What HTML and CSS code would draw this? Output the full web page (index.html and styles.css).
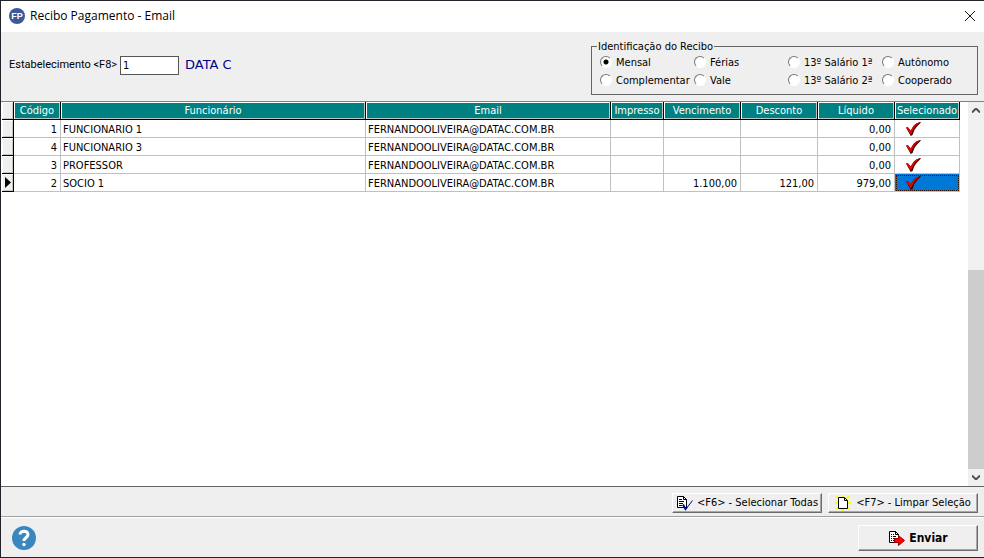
FILE: index.html
```html
<!DOCTYPE html>
<html lang="pt-BR">
<head>
<meta charset="utf-8">
<title>Recibo Pagamento - Email</title>
<link rel="stylesheet" href="styles.css">
</head>
<body>
<svg class="defs" aria-hidden="true">
  <symbol id="check" viewBox="0 0 16 15">
    <path d="M0 6l2-.5 3 3.500 3-5 3-2.500 4-1.500 1 .5-4 4-3 4-2 5.500-2 1z" fill="#400"/>
    <path d="M0 6l2-.5 3 4 3-5 3-3 3.500-1-4.500 4-3 5-2 4z" fill="#f00000"/>
  </symbol>
</svg>
<div class="window">
  <header class="titlebar">
    <svg class="logo" viewBox="0 0 16 16" aria-hidden="true"><circle cx="8" cy="8" r="8" fill="#3c5a9a"/><text x="8" y="11" text-anchor="middle" class="logo-text">FP</text></svg>
    <h1>Recibo Pagamento - Email</h1>
    <button class="close" aria-label="Fechar"><svg viewBox="0 0 10 10"><path d="M0 0l10 10M10 0L0 10" stroke="#111" fill="none"/></svg></button>
  </header>

  <form class="filters">
    <label class="field-label" for="estab">Estabelecimento &lt;F8&gt;</label>
    <input class="field" id="estab" type="text" value="1">
    <output class="company" for="estab">DATA C</output>
    <fieldset class="kinds">
      <legend>Identificação do Recibo</legend>
      <div class="options">
        <label><input type="radio" name="kind" checked>Mensal</label>
        <label><input type="radio" name="kind">Férias</label>
        <label><input type="radio" name="kind">13º Salário 1ª</label>
        <label><input type="radio" name="kind">Autônomo</label>
        <label><input type="radio" name="kind">Complementar</label>
        <label><input type="radio" name="kind">Vale</label>
        <label><input type="radio" name="kind">13º Salário 2ª</label>
        <label><input type="radio" name="kind">Cooperado</label>
      </div>
    </fieldset>
  </form>

  <main class="grid">
    <div class="sheet">
      <table>
        <colgroup><col class="c-mark"><col class="c-code"><col class="c-name"><col class="c-mail"><col class="c-print"><col class="c-num"><col class="c-num"><col class="c-num"><col class="c-sel"></colgroup>
        <thead>
          <tr><td class="mark"></td><th>Código</th><th>Funcionário</th><th>Email</th><th>Impresso</th><th>Vencimento</th><th>Desconto</th><th>Líquido</th><th>Selecionado</th></tr>
        </thead>
        <tbody>
          <tr><td class="mark"></td><td class="num">1</td><td>FUNCIONARIO 1</td><td>FERNANDOOLIVEIRA@DATAC.COM.BR</td><td></td><td></td><td></td><td class="num">0,00</td><td class="sel"><svg><use href="#check"/></svg></td></tr>
          <tr><td class="mark"></td><td class="num">4</td><td>FUNCIONARIO 3</td><td>FERNANDOOLIVEIRA@DATAC.COM.BR</td><td></td><td></td><td></td><td class="num">0,00</td><td class="sel"><svg><use href="#check"/></svg></td></tr>
          <tr><td class="mark"></td><td class="num">3</td><td>PROFESSOR</td><td>FERNANDOOLIVEIRA@DATAC.COM.BR</td><td></td><td></td><td></td><td class="num">0,00</td><td class="sel"><svg><use href="#check"/></svg></td></tr>
          <tr><td class="mark"><svg class="pointer" viewBox="0 0 6 11"><path d="M0 0l6 5.500-6 5.500z"/></svg></td><td class="num">2</td><td>SOCIO 1</td><td>FERNANDOOLIVEIRA@DATAC.COM.BR</td><td></td><td class="num">1.100,00</td><td class="num">121,00</td><td class="num">979,00</td><td class="sel current"><svg><use href="#check"/></svg></td></tr>
        </tbody>
      </table>
    </div>
    <div class="scrollbar">
      <button aria-label="Rolar para cima"><svg viewBox="0 0 8 5"><path d="M0 4.500l4-4 4 4"/></svg></button>
      <div class="track"><div class="thumb"></div></div>
      <button aria-label="Rolar para baixo"><svg viewBox="0 0 8 5"><path d="M0 .5l4 4 4-4"/></svg></button>
    </div>
  </main>

  <div class="toolbar">
    <button class="btn">
      <svg class="icon" viewBox="0 0 17 16"><path d="M1.500 1.500h6l3 3v8h-9z" fill="#fff" stroke="#000"/><path d="M7.500 1.500v3h3M3 4.500h3M3 6.500h5M3 8.500h4M3 10.500h3" stroke="#000" fill="none"/><path d="M7 10l3 4 6.500-8.500" fill="none" stroke="#0000a0"/><path d="M7 9.500l2.500 4.500 1.500-2" fill="none" stroke="#0000a0" stroke-width="2"/></svg>
      <span>&lt;F6&gt; - Selecionar Todas</span>
    </button>
    <button class="btn">
      <svg class="icon" viewBox="0 0 17 16"><path d="M1 1l3 3M7.500 0v3M14 1l-3 3M0 8h4M12 8h4M1 14l3-2M14 14l-3-2M7.500 13v3" stroke="#ff0" stroke-width="2"/><path d="M3.500 2.500h6l3 3v8h-9z" fill="#fff" stroke="#000"/><path d="M9.500 2.500v3h3" fill="none" stroke="#000"/></svg>
      <span>&lt;F7&gt; - Limpar Seleção</span>
    </button>
  </div>

  <footer class="footer">
    <button class="help" aria-label="Ajuda"><svg viewBox="0 0 24 24"><circle cx="12" cy="12" r="12" fill="#3a87c0"/><path d="M8 8.500C8 4 16 4 16 8.500c0 3-4 3-4 6.500" fill="none" stroke="#fff" stroke-width="3"/><circle cx="12" cy="18.500" r="1.700" fill="#fff"/></svg></button>
    <button class="btn send">
      <svg class="icon" viewBox="0 0 17 16"><path d="M1.500 1.500h6l3 3v8h-9z" fill="#fff" stroke="#000"/><path d="M7.500 1.500v3h3M3 4.500h1m1 0h1M3 6.500h1m1 0h3M3 8.500h1m1 0h2M3 10.500h1m1 0h2" stroke="#000" fill="none"/><path d="M6.500 8.500h4v-3l6 5-6 5v-3h-4z" fill="#f00" stroke="#a00000"/></svg>
      <span>Enviar</span>
    </button>
  </footer>
</div>
</body>
</html>
```
FILE: styles.css
```css
* { box-sizing: border-box; }
body {
  margin: 0;
  font: 11px/14px "DejaVu Sans Condensed", Tahoma, "DejaVu Sans", sans-serif;
  color: #000;
}
button, input { font: inherit; color: inherit; }
button { background: none; border: 0; padding: 0; }
svg { display: block; }
.defs { position: absolute; width: 0; height: 0; }

.window {
  display: flex;
  flex-direction: column;
  min-height: 100vh;
  background: #efefef;
  border: 1px solid #24222a;
  border-right-width: 0;
}

.titlebar {
  display: flex;
  align-items: center;
  height: 31px;
  padding: 0 9px 2px 8px;
  background: #fff;
}
.logo { width: 16px; height: 16px; }
.logo-text { font: bold 9px "Liberation Sans", sans-serif; fill: #fff; }
.titlebar h1 {
  flex: 1;
  margin: 0 0 0 5px;
  font: 12px/16px "Open Sans", sans-serif;
}
.close svg { width: 10px; height: 10px; }

.filters {
  display: flex;
  align-items: flex-start;
  height: 69px;
  padding: 8px 6px 0 8px;
}
.field-label {
  width: 104px;
  margin-top: 18px;
  font-family: Roboto, sans-serif;
  white-space: nowrap;
}
.field {
  width: 59px;
  height: 19px;
  margin: 16px 6px 0 7px;
  padding: 0 2px;
  border: 1px solid #555;
  background: #fff;
}
.company {
  margin-top: 17px;
  font: 13px/16px "DejaVu Sans", sans-serif;
  color: #00008b;
}
.kinds {
  width: 387px;
  margin: 0 0 0 auto;
  padding: 1px 8px 4px;
  border: 1px solid #646464;
}
.kinds legend { margin-left: -3px; padding: 1px 1px 0; line-height: 12px; }
.options {
  display: grid;
  grid-template-columns: 94px 94px 94px 1fr;
  grid-auto-rows: 18px;
}
.options label { display: flex; align-items: center; white-space: nowrap; }
.options input {
  appearance: none;
  flex: none;
  width: 12px;
  height: 12px;
  margin: 0 4px 2px 0;
  border: 1px solid;
  border-color: #777 #fff #fff #777;
  border-radius: 50%;
  background: #fff;
}
.options input:checked { background: radial-gradient(circle, #000 2px, #fff 3px); }

.grid {
  display: flex;
  flex: 1;
  border-top: 1px solid #808080;
  border-bottom: 1px solid #646464;
  background: #fff;
}
.sheet { flex: 1; padding-left: 1px; }
table { width: 958px; table-layout: fixed; border-collapse: separate; border-spacing: 0; }
.c-mark { width: 12px; }
.c-code { width: 47px; }
.c-name { width: 305px; }
.c-mail { width: 245px; }
.c-print { width: 53px; }
.c-num { width: 77px; }
.c-sel { width: 65px; }
th {
  height: 18px;
  padding: 1px 0 0;
  background: #008080;
  color: #fff;
  font-weight: normal;
  line-height: 14px;
  border-right: 1px solid #000;
  border-bottom: 1px solid #000;
  box-shadow: inset 1px 1px #fff, inset -1px -1px #b5c7c7;
}
tbody td {
  height: 18px;
  padding: 2px 3px 0 2px;
  border-right: 1px solid #c0c0c0;
  border-bottom: 1px solid #c0c0c0;
  line-height: 14px;
  white-space: nowrap;
}
tr .mark {
  padding: 0 0 0 3px;
  background: #efefef;
  border-right: 1px solid #000;
  border-bottom: 1px solid #000;
  box-shadow: inset 1px 1px #fff, inset -1px -1px #c8c8c8;
}
.pointer { width: 6px; height: 11px; }
.num { text-align: right; }
tbody .sel { padding: 0 0 0 10px; }
.sel svg { width: 17px; height: 14px; }
tbody .current { background: #0078d7; outline: 1px dotted #301000; outline-offset: -2px; }

.scrollbar {
  display: flex;
  flex-direction: column;
  width: 16px;
  background: #f0f0f0;
}
.scrollbar button { display: grid; place-items: center; height: 17px; }
.scrollbar svg { width: 8px; height: 5px; fill: none; stroke: #505050; stroke-width: 2; }
.track { display: flex; flex: 1; flex-direction: column; justify-content: flex-end; }
.thumb { height: 57%; background: #cdcdcd; }

.toolbar {
  display: flex;
  justify-content: flex-end;
  gap: 6px;
  height: 30px;
  padding: 6px 6px 4px;
  border-bottom: 1px solid #a0a0a0;
}
.btn {
  display: flex;
  align-items: center;
  justify-content: center;
  gap: 4px;
  width: 150px;
  height: 20px;
  border: 1px solid;
  border-color: #fff #6c6c6c #6c6c6c #fff;
  box-shadow: inset -1px -1px #a8a8a8;
  white-space: nowrap;
}
.icon { width: 17px; height: 16px; }
.footer {
  display: flex;
  align-items: center;
  justify-content: space-between;
  height: 40px;
  padding: 0 6px 0 11px;
  border-top: 1px solid #fff;
}
.help svg { width: 24px; height: 24px; }
.send {
  width: 120px;
  height: 26px;
  font-size: 12px;
  font-weight: bold;
}
```
